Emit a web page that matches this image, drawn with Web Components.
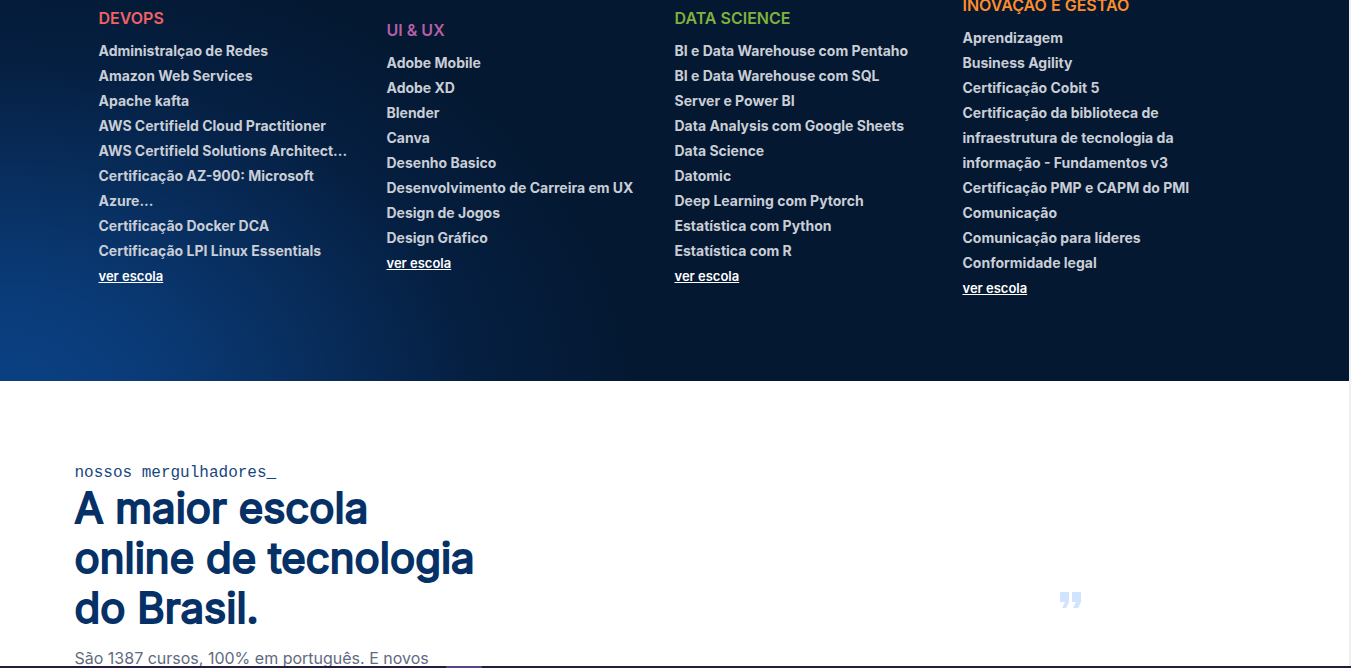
<!DOCTYPE html>
<html lang="pt-BR">
<head>
<meta charset="utf-8">
<meta name="viewport" content="width=device-width, initial-scale=1">
<title>Escolas de tecnologia</title>
<style>
  body { margin: 0; font-family: Inter, "Liberation Sans", sans-serif; background: #fff; }
</style>
</head>
<body>
<page-frame>
  <school-section>
    <school-card heading="DEVOPS" style="--accent:#f16165">
      <li>Administralçao de Redes</li>
      <li>Amazon Web Services</li>
      <li>Apache kafta</li>
      <li>AWS Certifield Cloud Practitioner</li>
      <li>AWS Certifield Solutions Architect...</li>
      <li>Certificação AZ-900: Microsoft Azure...</li>
      <li>Certificação Docker DCA</li>
      <li>Certificação LPI Linux Essentials</li>
    </school-card>
    <school-card heading="UI &amp; UX" style="--accent:#b65fa6">
      <li>Adobe Mobile</li>
      <li>Adobe XD</li>
      <li>Blender</li>
      <li>Canva</li>
      <li>Desenho Basico</li>
      <li>Desenvolvimento de Carreira em UX</li>
      <li>Design de Jogos</li>
      <li>Design Gráfico</li>
    </school-card>
    <school-card heading="DATA SCIENCE" style="--accent:#80b13c">
      <li>BI e Data Warehouse com Pentaho</li>
      <li>BI e Data Warehouse com SQL</li>
      <li>Server e Power BI</li>
      <li>Data Analysis com Google Sheets</li>
      <li>Data Science</li>
      <li>Datomic</li>
      <li>Deep Learning com Pytorch</li>
      <li>Estatística com Python</li>
      <li>Estatística com R</li>
    </school-card>
    <school-card heading="INOVAÇÃO E GESTÃO" style="--accent:#ff8c2a">
      <li>Aprendizagem</li>
      <li>Business Agility</li>
      <li>Certificação Cobit 5</li>
      <li>Certificação da biblioteca de infraestrutura de tecnologia da informação - Fundamentos v3</li>
      <li>Certificação PMP e CAPM do PMI</li>
      <li>Comunicação</li>
      <li>Comunicação para líderes</li>
      <li>Conformidade legal</li>
    </school-card>
  </school-section>
  <divers-section>
    <span slot="eyebrow">nossos mergulhadores_</span>
    <span slot="title">A maior escola online de tecnologia do Brasil.</span>
    São 1387 cursos, 100% em português. E novos
    <quote-mark slot="quote"></quote-mark>
  </divers-section>
</page-frame>

<script>
const attach = (el, html) => { el.attachShadow({ mode: 'open' }).innerHTML = html; };

customElements.define('page-frame', class extends HTMLElement {
  constructor() {
    super();
    attach(this, `
      <style>
        :host { display: grid; grid-template: minmax(0, 1fr) 2px / minmax(0, 1fr) 2px; height: 100vh; overflow: hidden; }
        main { overflow: hidden; }
        .track { background: #f0f0f0; }
        .bar { grid-column: 1 / -1; display: grid; grid-template-columns: 33% 36px; background: #231a3c; }
        .bar i { grid-column: 2; background: #5c4384; }
      </style>
      <main><slot></slot></main>
      <div class="track"></div>
      <div class="bar"><i></i></div>`);
  }
});

customElements.define('school-section', class extends HTMLElement {
  constructor() {
    super();
    attach(this, `
      <style>
        :host {
          display: block; overflow: hidden; padding-bottom: 80px;
          background: radial-gradient(ellipse 640px 460px at 0 105%, #0a4185 0%, #0a3b78 24%, #082d5c 50%, #051f41 74%, #041831 100%);
        }
        .grid {
          display: grid; grid-template-columns: repeat(4, minmax(0, 1fr)); align-items: center;
          max-width: 1152px; margin: -8px auto 0;
        }
      </style>
      <div class="grid"><slot></slot></div>`);
  }
});

customElements.define('school-card', class extends HTMLElement {
  constructor() {
    super();
    attach(this, `
      <style>
        :host { display: block; padding-right: 32px; color: #c9ced6; }
        h3 { margin: 0 0 7px; font-size: 16px; line-height: 26px; font-weight: 600; color: var(--accent); }
        ul { list-style: none; margin: 0; padding: 0; font-size: 14px; line-height: 25px; font-weight: 700; }
        a { display: block; width: fit-content; font-size: 13px; line-height: 26px; font-weight: 600; color: #fff; }
      </style>
      <h3></h3>
      <ul><slot></slot></ul>
      <a href="#">ver escola</a>`);
    this.shadowRoot.querySelector('h3').textContent = this.getAttribute('heading');
  }
});

customElements.define('quote-mark', class extends HTMLElement {
  constructor() {
    super();
    attach(this, `
      <style>:host { display: block; } svg { display: block; }</style>
      <svg width="22" height="17" viewBox="0 0 22 17" fill="#d0e3ff" aria-hidden="true">
        <path d="M0 0H9V10L6 16H2L5 10H0ZM12 0H21V10L18 16H13L16 10H12Z"/>
      </svg>`);
  }
});

customElements.define('divers-section', class extends HTMLElement {
  constructor() {
    super();
    attach(this, `
      <style>
        :host { display: grid; grid-template-columns: 410px auto; justify-content: space-between; max-width: 1200px; margin: 0 auto; padding-top: 82px; }
        .eyebrow { margin: 0; font: 16px/20px "Courier New", "Liberation Mono", monospace; color: #17477f; }
        h2 { margin: 0; font-size: 42px; line-height: 50px; font-weight: 400; color: #063166; -webkit-text-stroke: 2px #063166; }
        .lead { margin: 12px 0 0; font-size: 16px; line-height: 26px; color: #5f6b80; white-space: nowrap; }
        .quote { padding: 129px 193px 0 0; }
      </style>
      <div>
        <p class="eyebrow"><slot name="eyebrow"></slot></p>
        <h2><slot name="title"></slot></h2>
        <p class="lead"><slot></slot></p>
      </div>
      <div class="quote"><slot name="quote"></slot></div>`);
  }
});
</script>
</body>
</html>
